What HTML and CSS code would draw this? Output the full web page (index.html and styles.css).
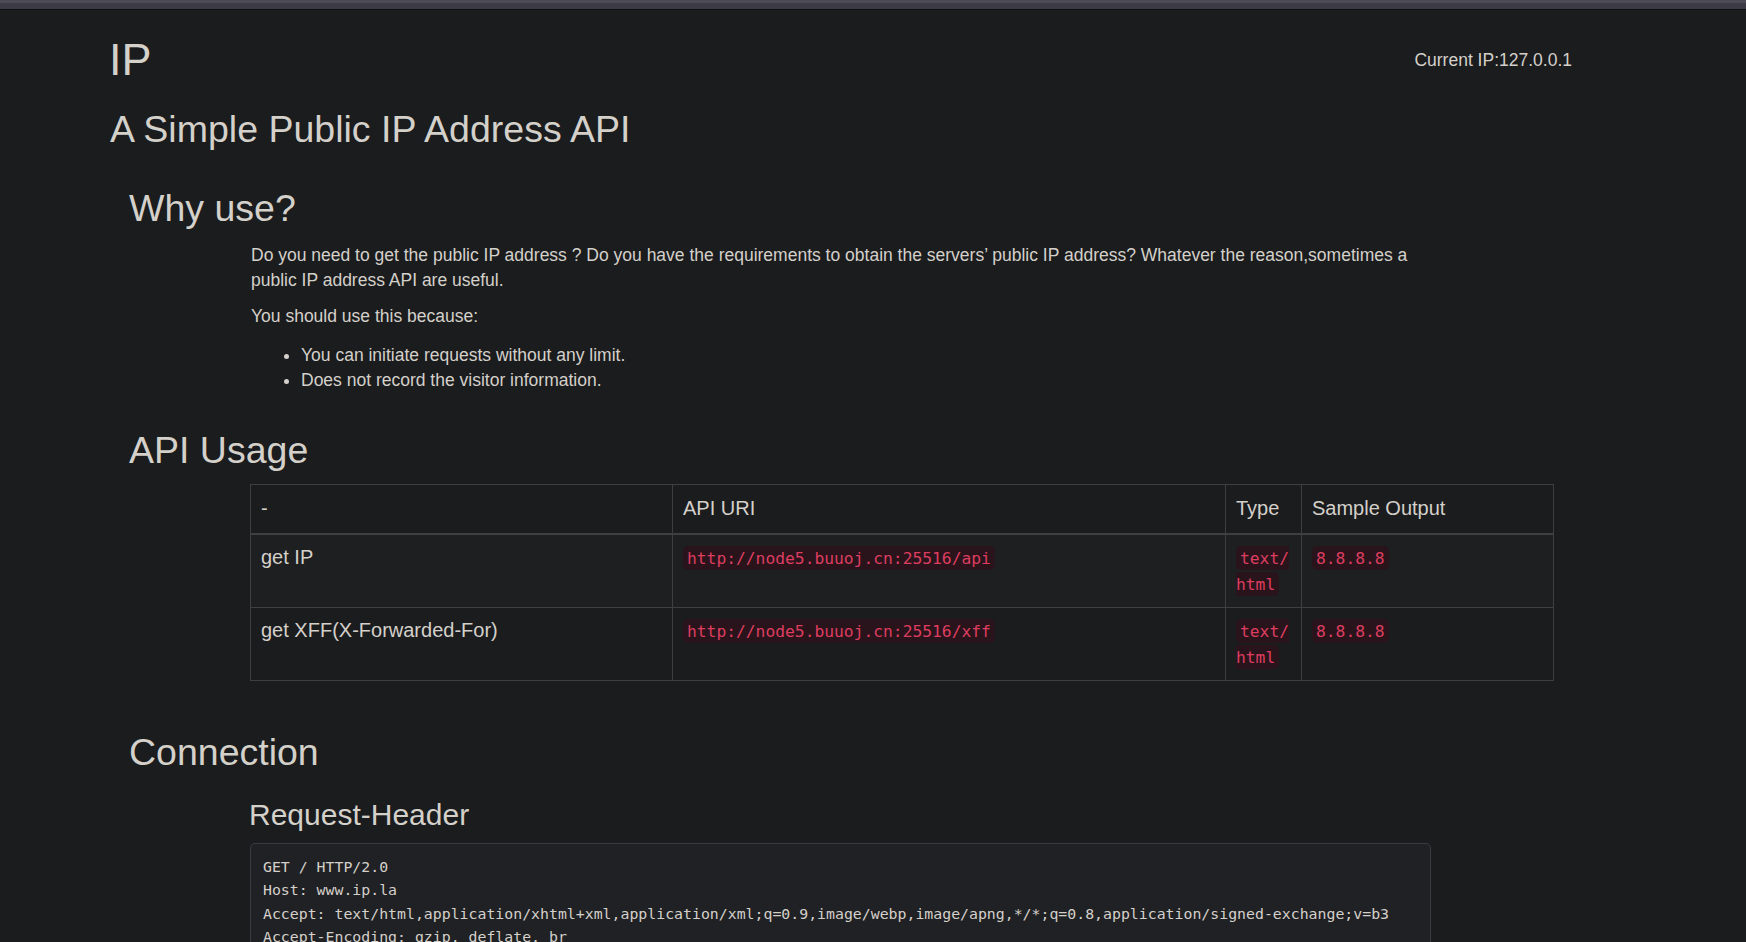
FILE: index.html
```html
<!DOCTYPE html>
<html lang="en">
<head>
<meta charset="utf-8">
<title>IP</title>
<link rel="stylesheet" href="styles.css">
</head>
<body>
<div class="topbar"></div>
<div class="page">
  <header class="head">
    <h1 class="title">IP</h1>
    <div class="current">Current IP:127.0.0.1</div>
  </header>
  <h2 class="subtitle">A Simple Public IP Address API</h2>

  <h2 class="sec sec-why">Why use?</h2>
  <div class="content">
    <p class="p1">Do you need to get the public IP address ? Do you have the requirements to obtain the servers’ public IP address? Whatever the reason,sometimes a public IP address API are useful.</p>
    <p class="p2">You should use this because:</p>
    <ul class="list">
      <li>You can initiate requests without any limit.</li>
      <li>Does not record the visitor information.</li>
    </ul>
  </div>

  <h2 class="sec sec-api">API Usage</h2>
  <table class="api">
    <colgroup>
      <col class="c1"><col class="c2"><col class="c3"><col class="c4">
    </colgroup>
    <thead>
      <tr><th>-</th><th>API URI</th><th>Type</th><th>Sample Output</th></tr>
    </thead>
    <tbody>
      <tr class="odd">
        <td>get IP</td>
        <td><code>http://node5.buuoj.cn:25516/api</code></td>
        <td><code>text/<wbr>html</code></td>
        <td><code>8.8.8.8</code></td>
      </tr>
      <tr>
        <td>get XFF(X-Forwarded-For)</td>
        <td><code>http://node5.buuoj.cn:25516/xff</code></td>
        <td><code>text/<wbr>html</code></td>
        <td><code>8.8.8.8</code></td>
      </tr>
    </tbody>
  </table>

  <h2 class="sec sec-conn">Connection</h2>
  <h3 class="subsec">Request-Header</h3>
  <pre class="req">GET / HTTP/2.0
Host: www.ip.la
Accept: text/html,application/xhtml+xml,application/xml;q=0.9,image/webp,image/apng,*/*;q=0.8,application/signed-exchange;v=b3
Accept-Encoding: gzip, deflate, br
Accept-Language: zh-CN,zh;q=0.9,en;q=0.8</pre>
</div>
</body>
</html>
```

FILE: styles.css
```css
html, body {
  margin: 0;
  padding: 0;
  background: #1b1c1e;
}
body {
  color: #d4d0ca;
  font-family: "Liberation Sans", Arial, sans-serif;
  font-size: 17.5px;
  line-height: 25px;
  overflow: hidden;
}

.topbar {
  height: 6px;
  border-top: 3px solid #4c4b56;
  border-bottom: 1px solid #0f0f11;
  background: #3c3b45;
}

.page {
  display: flex;
  flex-direction: column;
  align-items: flex-start;
  padding: 0 174px 0 107px;
}

.head {
  align-self: stretch;
  display: flex;
  justify-content: space-between;
  align-items: flex-start;
}

h1, h2, h3 {
  font-weight: normal;
  margin: 0;
}

.title {
  font-size: 45px;
  line-height: 49.5px;
  margin-top: 24.7px;
  margin-left: 2px;
}

.current {
  margin-top: 38.2px;
  font-size: 17.5px;
  line-height: 25px;
}

.subtitle {
  font-size: 37.5px;
  line-height: 41.25px;
  margin-top: 25.2px;
  margin-left: 3px;
}

.sec {
  font-size: 37.5px;
  line-height: 41.25px;
  margin-left: 22px;
}
.sec-why { margin-top: 37.3px; }
.sec-api { margin-top: 37.2px; }
.sec-conn { margin-top: 51px; }

.content {
  margin-left: 144px;
  width: 1180px;
}
.content p { margin: 0; }
.p1 { margin-top: 13.5px !important; }
.p2 { margin-top: 11.5px !important; }
.list {
  margin: 13.5px 0 0;
  padding-left: 50px;
}

.api {
  margin-left: 143px;
  margin-top: 12.6px;
  width: 1304px;
  table-layout: fixed;
  border-collapse: collapse;
  font-size: 20px;
  line-height: 25px;
  border: 1px solid #3d3f41;
}
.api col.c1 { width: 422px; }
.api col.c2 { width: 553px; }
.api col.c3 { width: 76px; }
.api th, .api td {
  text-align: left;
  vertical-align: top;
  font-weight: normal;
  padding: 10px 10px;
  border: 1px solid #3d3f41;
}
.api thead th {
  padding-top: 11.5px;
  padding-bottom: 11.5px;
  border-bottom: 2px solid #3d3f41;
}
.api tr.odd td {
  background: #1d1f21;
}

code {
  font-family: "DejaVu Sans Mono", "Liberation Mono", monospace;
  font-size: 16.3px;
  color: #dd3d60;
  background: #2a141b;
  padding: 2.5px 4px;
  border-radius: 5px;
}

.subsec {
  font-size: 30px;
  line-height: 33px;
  margin-top: 24.6px;
  margin-left: 142px;
}

.req {
  box-sizing: border-box;
  width: 1181px;
  margin: 12.2px 0 0 143px;
  padding: 12px 12px;
  background: #202124;
  border: 1px solid #3a3b3f;
  border-radius: 5px;
  color: #d4d0ca;
  font-family: "DejaVu Sans Mono", "Liberation Mono", monospace;
  font-size: 14.85px;
  line-height: 23.4px;
  white-space: pre;
  overflow: hidden;
}
```
